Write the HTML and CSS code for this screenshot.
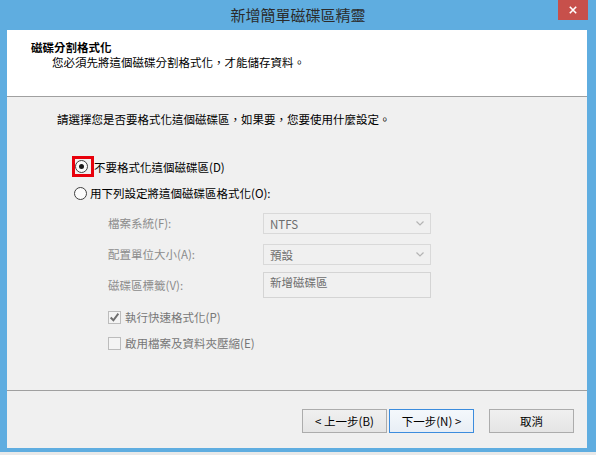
FILE: index.html
```html
<!DOCTYPE html>
<html lang="zh-Hant">
<head>
    <meta charset="UTF-8">
    <title>新增簡單磁碟區精靈</title>
    <link rel="stylesheet" href="styles.css">
</head>
<body>
    <div class="window">
        <div class="titlebar">
            <span class="title">新增簡單磁碟區精靈</span>
            <button class="close-btn">
                <svg viewBox="0 0 10 10" class="close-icon">
                    <path d="M1 1L9 9M9 1L1 9"/>
                </svg>
            </button>
        </div>

        <div class="client">
            <div class="header">
                <div class="header-title">磁碟分割格式化</div>
                <div class="header-sub">您必須先將這個磁碟分割格式化，才能儲存資料。</div>
            </div>

            <div class="content">
                <p class="prompt">請選擇您是否要格式化這個磁碟區，如果要，您要使用什麼設定。</p>

                <div class="option highlighted">
                    <span class="mark"><span class="radio checked"></span></span>
                    <span>不要格式化這個磁碟區(D)</span>
                </div>
                <div class="option">
                    <span class="radio"></span>
                    <span>用下列設定將這個磁碟區格式化(O):</span>
                </div>

                <div class="form">
                    <div class="row">
                        <span class="label">檔案系統(F):</span>
                        <div class="combo">
                            <span>NTFS</span>
                            <svg class="chevron" viewBox="0 0 8 5"><path d="M0.5 0.5L4 4L7.5 0.5"/></svg>
                        </div>
                    </div>
                    <div class="row">
                        <span class="label">配置單位大小(A):</span>
                        <div class="combo">
                            <span>預設</span>
                            <svg class="chevron" viewBox="0 0 8 5"><path d="M0.5 0.5L4 4L7.5 0.5"/></svg>
                        </div>
                    </div>
                    <div class="row">
                        <span class="label">磁碟區標籤(V):</span>
                        <div class="textbox">新增磁碟區</div>
                    </div>

                    <div class="check-row">
                        <span class="checkbox">
                            <svg viewBox="0 0 10 10"><path d="M1.5 5L4 7.5L8.5 1.5"/></svg>
                        </span>
                        <span>執行快速格式化(P)</span>
                    </div>
                    <div class="check-row">
                        <span class="checkbox"></span>
                        <span>啟用檔案及資料夾壓縮(E)</span>
                    </div>
                </div>
            </div>

            <div class="footer">
                <button class="btn">&lt; 上一步(B)</button>
                <button class="btn default">下一步(N) &gt;</button>
                <button class="btn cancel">取消</button>
            </div>
        </div>
        <div class="desktop-strip"></div>
    </div>
</body>
</html>
```

FILE: styles.css
```css
body {
    margin: 0;
    font-family: "Noto Sans CJK TC", "Noto Sans", sans-serif;
    font-size: 11.5px;
    color: #000;
}

.window {
    width: 596px;
    height: 455px;
    background: #5fade0;
    display: flex;
    flex-direction: column;
    overflow: hidden;
}

/* Title bar */
.titlebar {
    position: relative;
    height: 30px;
    display: flex;
    justify-content: center;
    align-items: center;
}

.title {
    font-size: 15px;
    color: #2b2b2b;
    margin-top: -2px;
}

.close-btn {
    position: absolute;
    top: 0;
    right: 8px;
    width: 30px;
    height: 20px;
    border: none;
    padding: 0;
    background: #c7504b;
    display: flex;
    align-items: center;
    justify-content: center;
}

.close-icon {
    width: 8px;
    height: 8px;
    stroke: #fff;
    stroke-width: 2;
    fill: none;
}

/* Client area */
.client {
    margin: 0 9px 0 7px;
    height: 418px;
    background: #f0f0f0;
    display: flex;
    flex-direction: column;
}

.header {
    height: 67px;
    background: #fff;
    border-bottom: 1px solid #a0a0a0;
    padding: 9px 0 0 24px;
    box-sizing: border-box;
}

.header-title {
    font-weight: bold;
    line-height: 16px;
}

.header-sub {
    padding-left: 21px;
    line-height: 15px;
}

.content {
    height: 294px;
    padding: 14px 0 0 50px;
    box-sizing: border-box;
    border-bottom: 1px solid #a0a0a0;
}

.prompt {
    margin: 0 0 29px 0;
    line-height: 16px;
}

.option {
    display: flex;
    align-items: center;
    gap: 3px;
    height: 20px;
    margin-left: 17px;
    margin-bottom: 6px;
}

.option.highlighted {
    margin-left: 15px;
    gap: 0;
    height: 21px;
}

.mark {
    width: 16px;
    height: 15px;
    border: 3px solid #e8000b;
    display: flex;
    align-items: center;
    padding-left: 0;
}

.radio {
    width: 11px;
    height: 11px;
    border: 1px solid #3f3f3f;
    border-radius: 50%;
    background: #fbfbfb;
    box-sizing: content-box;
    position: relative;
}

.radio.checked::after {
    content: "";
    position: absolute;
    left: 3px;
    top: 3px;
    width: 5px;
    height: 5px;
    border-radius: 50%;
    background: #1a1a1a;
}

/* Disabled format settings */
.form {
    padding-left: 51px;
    margin-top: 10px;
    color: #8c8c8c;
}

.row {
    display: flex;
    align-items: flex-start;
    margin-bottom: 10px;
}

.label {
    width: 155px;
    line-height: 21px;
}

.combo {
    width: 154px;
    height: 19px;
    border: 1px solid #d9d9d9;
    background: #f0f0f0;
    display: flex;
    align-items: center;
    justify-content: space-between;
    padding: 0 6px 0 6px;
    box-sizing: content-box;
    color: #6d6d6d;
}

.chevron {
    width: 8px;
    height: 5px;
    stroke: #b4b4b4;
    fill: none;
    stroke-width: 1.2;
}

.textbox {
    width: 160px;
    height: 23px;
    border: 1px solid #d4d4d4;
    background: #f0f0f0;
    padding: 1px 0 0 6px;
    line-height: 16px;
    color: #6d6d6d;
    margin-top: -3px;
}

.check-row {
    display: flex;
    align-items: center;
    gap: 4px;
    height: 18px;
    margin-bottom: 8px;
    color: #777;
}

.check-row:first-of-type {
    margin-top: 12px;
}

.checkbox {
    width: 11px;
    height: 11px;
    border: 1px solid #bcbcbc;
    background: #f4f4f4;
    display: flex;
}

.checkbox svg {
    width: 11px;
    height: 11px;
    stroke: #6f6f6f;
    stroke-width: 1.8;
    fill: none;
}

/* Buttons */
.footer {
    flex: 1;
    display: flex;
    align-items: flex-start;
    padding: 18px 0 0 295px;
    gap: 2px;
}

.btn {
    width: 85px;
    height: 24px;
    font-family: inherit;
    font-size: 11.5px;
    color: #000;
    background: linear-gradient(#f0f0f0, #e5e5e5);
    border: 1px solid #acacac;
    padding: 0;
}

.btn.default {
    border-color: #3c8cdd;
    background: linear-gradient(#f4f8fc, #e8eef5);
}

.btn.cancel {
    margin-left: 13px;
}

.desktop-strip {
    margin-top: 4px;
    height: 3px;
    background: #e9e9e9;
}
```
